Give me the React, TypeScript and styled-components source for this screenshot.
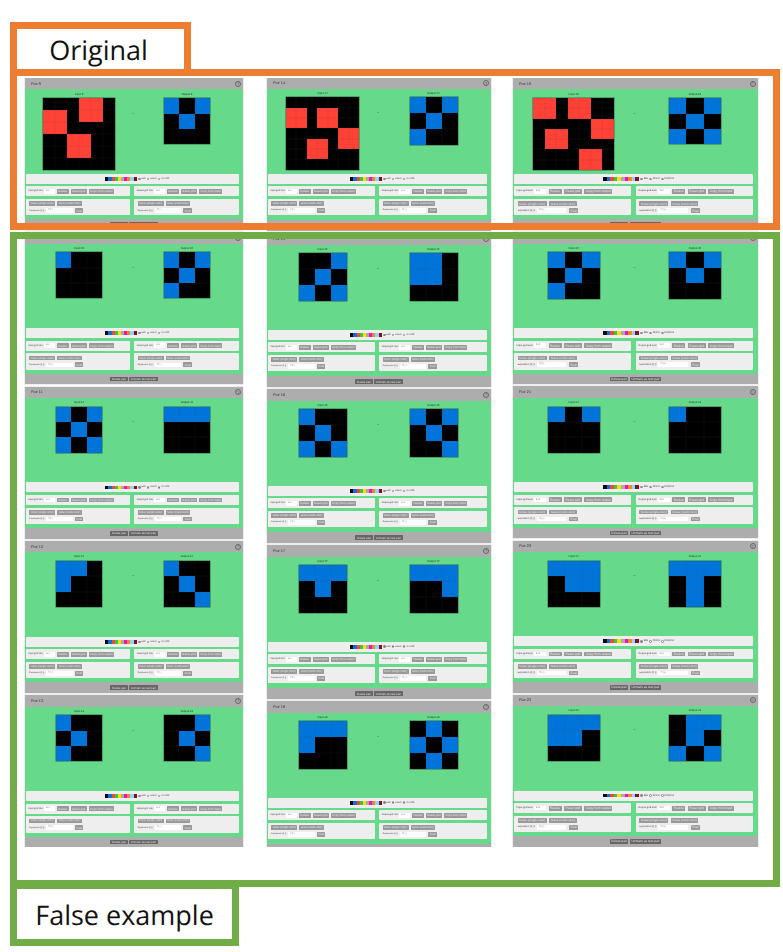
import styled, { createGlobalStyle } from "styled-components";

type PairData = { id: number; input: string[]; output: string[]; cropped?: boolean };
type ColumnData = {
  width: number;
  height: number;
  gap: number;
  left: number;
  top: number;
  stretch: number;
  bigW: number;
  bigH: number;
  smallW: number;
  smallH: number;
  pad: number;
  pairs: PairData[];
};

const COLORS: Record<string, string> = { ".": "#000000", b: "#0074d9", r: "#ff4136" };
const PALETTE = ["#000000", "#0074d9", "#ff4136", "#2ecc40", "#ffdc00", "#aaaaaa", "#f012be", "#ff851b", "#7fdbff", "#870c25"];

const COLUMNS: ColumnData[] = [
  {
    width: 218, height: 152, gap: 2.3, left: 0, top: 0, stretch: 1,
    bigW: 72, bigH: 72, smallW: 46.7, smallH: 46, pad: 4,
    pairs: [
      { id: 9, input: ["...rr.", "rr.rr.", "rr....", "..rr..", "..rr..", "......"], output: ["b.b", ".b.", "..."] },
      { id: 10, input: ["b..", "...", "..."], output: ["b.b", ".b.", "b.."] },
      { id: 11, input: ["b.b", ".b.", "b.b"], output: ["bbb", "...", "..."] },
      { id: 12, input: ["bb.", "b..", "..."], output: ["b..", ".b.", "..b"] },
      { id: 13, input: ["b..", ".b.", "b.."], output: ["..b", ".b.", "..b"] },
    ],
  },
  {
    width: 224, height: 153.6, gap: 2.4, left: 24, top: -0.7, stretch: 1,
    bigW: 73.7, bigH: 72.3, smallW: 48, smallH: 47.3, pad: 5,
    pairs: [
      { id: 14, input: [".......", "rr.rr..", "rr.rr..", ".....rr", "..rr.rr", "..rr...", "......."], output: ["b.b", ".b.", "b.."] },
      { id: 15, input: ["..b", ".b.", "b.b"], output: ["bb.", "bb.", "..."] },
      { id: 16, input: ["b..", ".b.", "b.b"], output: ["b.b", ".b.", "..b"] },
      { id: 17, input: ["bbb", ".b.", "..."], output: ["bbb", "..b", "..."] },
      { id: 18, input: ["bbb", "b..", "..."], output: [".b.", "b.b", ".b."], cropped: true },
    ],
  },
  {
    width: 244.7, height: 152, gap: 2.2, left: 22, top: 0, stretch: 1.12,
    bigW: 80.7, bigH: 71.7, smallW: 52.3, smallH: 46.3, pad: 4,
    pairs: [
      { id: 19, input: ["rr.rr..", "rr.rr..", ".....rr", ".rr..rr", ".rr....", "....rr.", "....rr."], output: ["b.b", ".b.", "b.b"] },
      { id: 20, input: ["b.b", ".b.", "b.."], output: ["b.b", ".b.", "..."] },
      { id: 21, input: ["b.b", "...", "..."], output: ["b..", "...", "..."] },
      { id: 22, input: ["bbb", ".bb", "..."], output: ["bbb", ".b.", ".b."] },
      { id: 23, input: ["bbb", "bb.", "..."], output: [".bb", ".b.", "b.b"] },
    ],
  },
];

function PairGrid({ rows, small }: { rows: string[]; small: boolean }) {
  return (
    <StGrid $n={rows.length} $small={small}>
      {rows.join("").split("").map((c, i) => (
        <StCell key={i} $color={COLORS[c]} />
      ))}
    </StGrid>
  );
}

function SizeCard({ label, size, copy }: { label: string; size: string; copy: string }) {
  return (
    <StSizeCard>
      <StLabel>{label}</StLabel>
      <StSizeInput>{size}</StSizeInput>
      <StButton>Resize</StButton>
      <StButton>Reset grid</StButton>
      <StButton>Copy from {copy}</StButton>
    </StSizeCard>
  );
}

function NoiseCard() {
  return (
    <StNoiseCard>
      <StNoiseLine>
        <StNoiseButton>Noise (single color)</StNoiseButton>
        <StNoiseButton>Noise (multi color)</StNoiseButton>
      </StNoiseLine>
      <StNoiseLine>
        <StExprLabel>Expression (f(.)):</StExprLabel>
        <StExprInput>f*f(+)</StExprInput>
        <StButton>Eval</StButton>
      </StNoiseLine>
    </StNoiseCard>
  );
}

function Pair({ pair }: { pair: PairData }) {
  return (
    <StPanel>
      <StHeader>
        <span>Pair {pair.id}</span>
        <StHelp>?</StHelp>
      </StHeader>
      <StBody>
        <StGrids>
          <StSide>
            <StSideTitle>Input {pair.id}</StSideTitle>
            <PairGrid rows={pair.input} small={pair.input.length === 3} />
          </StSide>
          <StArrow>→</StArrow>
          <StSide>
            <StSideTitle>Output {pair.id}</StSideTitle>
            <PairGrid rows={pair.output} small />
          </StSide>
        </StGrids>
        <StControls>
          <StPaletteCard>
            <StSwatches>
              {PALETTE.map((color) => (
                <StSwatch key={color} $color={color} />
              ))}
            </StSwatches>
            <StRadio $checked />
            <StLabel>Edit</StLabel>
            <StRadio />
            <StLabel>Select</StLabel>
            <StRadio />
            <StLabel>Flood fill</StLabel>
          </StPaletteCard>
          <StCardRow>
            <SizeCard label="Input grid size:" size="3x3" copy="output" />
            <SizeCard label="Output grid size:" size="3x3" copy="input" />
          </StCardRow>
          <StCardRow>
            <NoiseCard />
            <NoiseCard />
          </StCardRow>
        </StControls>
      </StBody>
      <StFooter>
        {!pair.cropped && (
          <>
            <StDarkButton>Delete pair</StDarkButton>
            <StDarkButton>Unmark as test pair</StDarkButton>
          </>
        )}
      </StFooter>
    </StPanel>
  );
}

export default function App() {
  return (
    <StFigure>
      <GlobalStyle />
      <StColumns>
        {COLUMNS.map((col) => (
          <StColumn key={col.pairs[0].id} $col={col}>
            {col.pairs.map((pair) => (
              <Pair key={pair.id} pair={pair} />
            ))}
          </StColumn>
        ))}
      </StColumns>
      <StFrame $color="#ed7d31" $top={69} $height={161} />
      <StFrame $color="#70ad47" $top={232} $height={655} />
      <StTag $color="#ed7d31" $top={22} $width={181} $height={54} $nudge={4}>Original</StTag>
      <StTag $color="#70ad47" $top={882} $width={229} $height={64} $nudge={0}>False example</StTag>
    </StFigure>
  );
}

const GlobalStyle = createGlobalStyle`
  body {
    margin: 0;
    background: #ffffff;
    font-family: "Liberation Sans", Arial, sans-serif;
    text-rendering: geometricPrecision;
  }
`;

const StFigure = styled.div`
  position: relative;
  width: 783px;
  height: 952px;
  padding-top: 78px;
  box-sizing: border-box;
  overflow: hidden;
`;

const StColumns = styled.div`
  display: flex;
  align-items: flex-start;
  height: 769px;
  padding-left: 25px;
  overflow: hidden;
`;

const StColumn = styled.div<{ $col: ColumnData }>`
  --k: ${(p) => p.$col.stretch};
  --ts: ${(p) => p.$col.stretch * 2.9}px;
  --big-w: ${(p) => p.$col.bigW}px;
  --big-h: ${(p) => p.$col.bigH}px;
  --small-w: ${(p) => p.$col.smallW}px;
  --small-h: ${(p) => p.$col.smallH}px;
  --panel-h: ${(p) => p.$col.height}px;
  --pad: ${(p) => p.$col.pad}px;
  display: flex;
  flex-direction: column;
  flex: none;
  gap: ${(p) => p.$col.gap}px;
  width: ${(p) => p.$col.width}px;
  margin-left: ${(p) => p.$col.left}px;
  margin-top: ${(p) => p.$col.top}px;
`;

const StPanel = styled.section`
  display: flex;
  flex-direction: column;
  flex: none;
  height: var(--panel-h);
  background-color: #66d98a;
  box-shadow: 0 0 0 0.5px #dddddd;
  font-size: var(--ts);
  color: #333333;
  filter: blur(0.25px);
`;

const StHeader = styled.header`
  display: flex;
  flex: none;
  align-items: center;
  justify-content: space-between;
  height: 11.4px;
  padding: 0 2px 0 6px;
  background-color: #adadad;
  font-size: 3.8px;
  color: #333333;
`;

const StHelp = styled.span`
  display: flex;
  align-items: center;
  justify-content: center;
  box-sizing: border-box;
  width: 6px;
  height: 6px;
  border: 0.6px solid #666666;
  border-radius: 50%;
  font-size: 4px;
  color: #555555;
`;

const StBody = styled.div`
  display: flex;
  flex: 1;
  flex-direction: column;
  min-height: 0;
`;

const StGrids = styled.div`
  display: flex;
  flex: 1;
  align-items: flex-start;
  padding: 2.2px 2px 0 0;
`;

const StSide = styled.div`
  display: flex;
  flex: 1;
  flex-direction: column;
  align-items: center;
  gap: 2.6px;
`;

const StSideTitle = styled.div`
  height: 4px;
  line-height: 4px;
  font-size: 2.8px;
  color: #333333;
`;

const StArrow = styled.div`
  width: 0;
  margin-top: 19px;
  display: flex;
  justify-content: center;
  font-size: 3.6px;
  color: #444444;
`;

const StGrid = styled.div<{ $n: number; $small: boolean }>`
  display: grid;
  grid-template-columns: repeat(${(p) => p.$n}, 1fr);
  grid-template-rows: repeat(${(p) => p.$n}, 1fr);
  width: ${(p) => (p.$small ? "var(--small-w)" : "var(--big-w)")};
  height: ${(p) => (p.$small ? "var(--small-h)" : "var(--big-h)")};
  box-shadow: 0 0 0 0.5px #2f6f4a;
`;

const StCell = styled.div<{ $color: string }>`
  background-color: ${(p) => p.$color};
  box-shadow: inset 0 0 0 0.2px rgba(70, 70, 70, 0.3);
`;

const StControls = styled.div`
  display: flex;
  flex: none;
  flex-direction: column;
  gap: 2.6px;
  padding: 0 4.5px var(--pad) 1px;
`;

const StPaletteCard = styled.div`
  display: flex;
  align-items: center;
  justify-content: center;
  gap: calc(var(--k) * 0.7px);
  height: 10px;
  padding-left: 10px;
  background-color: #eeeeee;
  border-radius: 1px;
`;

const StSwatches = styled.div`
  display: flex;
  margin-right: 0.4px;
`;

const StSwatch = styled.span<{ $color: string }>`
  width: calc(var(--k) * 3.17px);
  height: 3.8px;
  background-color: ${(p) => p.$color};
`;

const StRadio = styled.span<{ $checked?: boolean }>`
  box-sizing: border-box;
  width: 2.4px;
  height: 2.4px;
  margin-left: 0.6px;
  border: 0.3px solid #888888;
  border-radius: 50%;
  background-color: ${(p) => (p.$checked ? "#777777" : "#ffffff")};
`;

const StCardRow = styled.div`
  display: flex;
  gap: 4.3px;
`;

const StSizeCard = styled.div`
  display: flex;
  flex: 1;
  align-items: center;
  gap: calc(var(--k) * 2.2px);
  height: 10px;
  padding-left: calc(var(--k) * 2.3px);
  background-color: #eeeeee;
  border-radius: 1px;
`;

const StNoiseCard = styled.div`
  display: flex;
  flex: 1;
  flex-direction: column;
  gap: 2px;
  height: 16.3px;
  box-sizing: border-box;
  padding: 2.3px 0 0 calc(var(--k) * 3.3px);
  background-color: #eeeeee;
  border-radius: 1px;
`;

const StNoiseLine = styled.div`
  display: flex;
  align-items: center;
  gap: calc(var(--k) * 2.2px);
  height: 4.8px;
`;

const StLabel = styled.span`
  font-size: calc(var(--ts) * 0.8);
  line-height: 4px;
  white-space: nowrap;
  color: #444444;
`;

const StExprLabel = styled(StLabel)`
  margin-right: calc(var(--k) * -0.8px);
  font-size: calc(var(--ts) * 0.73);
`;

const StSizeInput = styled.span`
  box-sizing: border-box;
  flex: none;
  width: calc(var(--k) * 11px);
  height: 4.6px;
  margin-left: calc(var(--k) * -1.8px);
  padding-left: 2px;
  background-color: #ffffff;
  font-size: calc(var(--ts) * 0.8);
  line-height: 4.6px;
  color: #888888;
`;

const StExprInput = styled(StSizeInput)`
  width: calc(var(--k) * 26.6px);
  margin-left: 0;
`;

const StButton = styled.span`
  display: flex;
  align-items: center;
  height: 4.7px;
  padding: 0 calc(var(--k) * 1.4px);
  background-color: #999999;
  border-radius: 0.6px;
  font-size: var(--ts);
  white-space: nowrap;
  color: #e4e4e4;
`;

const StNoiseButton = styled(StButton)`
  font-size: calc(var(--ts) * 0.93);
`;

const StFooter = styled.footer`
  display: flex;
  flex: none;
  align-items: center;
  justify-content: center;
  gap: 1.6px;
  height: 10.7px;
  background-color: #adadad;
`;

const StDarkButton = styled.span`
  display: flex;
  align-items: center;
  height: 4.6px;
  padding: 0 1.6px;
  background-color: #666666;
  border-radius: 0.6px;
  font-size: var(--ts);
  white-space: nowrap;
  color: #dddddd;
`;

const StFrame = styled.div<{ $color: string; $top: number; $height: number }>`
  position: absolute;
  left: 10px;
  top: ${(p) => p.$top}px;
  box-sizing: border-box;
  width: 770px;
  height: ${(p) => p.$height}px;
  border: 7px solid ${(p) => p.$color};
`;

const StTag = styled.div<{ $color: string; $top: number; $width: number; $height: number; $nudge: number }>`
  position: absolute;
  left: 10px;
  top: ${(p) => p.$top}px;
  display: flex;
  align-items: center;
  justify-content: center;
  box-sizing: border-box;
  width: ${(p) => p.$width}px;
  height: ${(p) => p.$height}px;
  padding-right: ${(p) => p.$nudge}px;
  border: 7px solid ${(p) => p.$color};
  background-color: #ffffff;
  font-family: "Open Sans", "Noto Sans", sans-serif;
  font-size: 27px;
  color: #111111;
`;
